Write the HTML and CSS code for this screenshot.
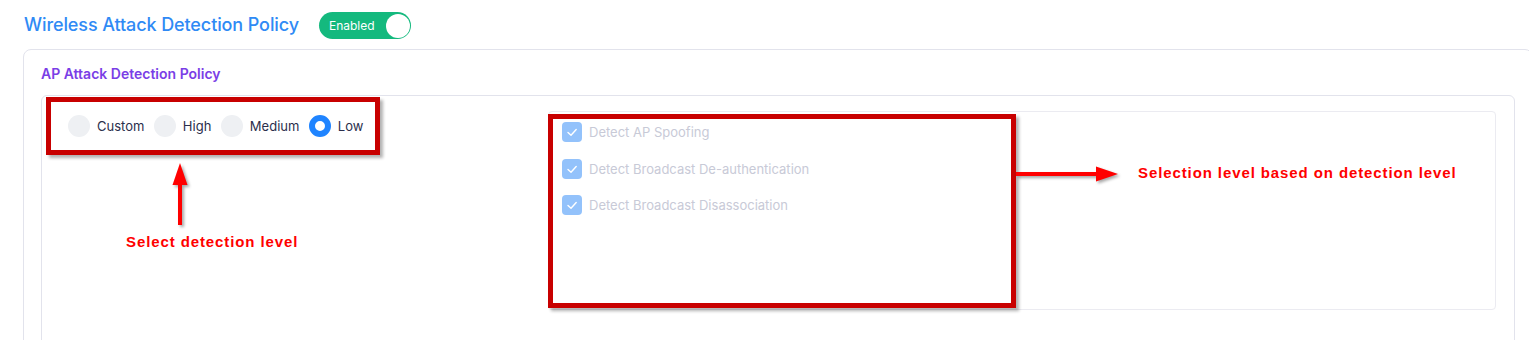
FILE: index.html
```html
<!DOCTYPE html>
<html lang="en">
<head>
    <meta charset="UTF-8">
    <meta name="viewport" content="width=device-width, initial-scale=1.0">
    <title>Wireless Attack Detection Policy</title>
    <link rel="stylesheet" href="styles.css">
</head>
<body>
    <div class="page">
        <div class="head">
            <h1 class="title">Wireless Attack Detection Policy</h1>
            <span class="toggle">
                <span class="toggle-text">Enabled</span>
                <span class="knob"></span>
            </span>
        </div>

        <section class="card">
            <h2 class="card-title">AP Attack Detection Policy</h2>
            <div class="policy">
                <div class="levels">
                    <label class="radio"><span class="dot"></span>Custom</label>
                    <label class="radio"><span class="dot"></span>High</label>
                    <label class="radio"><span class="dot"></span>Medium</label>
                    <label class="radio"><span class="dot on"></span>Low</label>
                </div>
                <div class="checks">
                    <div class="check">
                        <span class="box"><svg viewBox="0 0 20 20"><polyline points="6,10.5 9,13.2 14.2,7.5"/></svg></span>
                        Detect AP Spoofing
                    </div>
                    <div class="check">
                        <span class="box"><svg viewBox="0 0 20 20"><polyline points="6,10.5 9,13.2 14.2,7.5"/></svg></span>
                        Detect Broadcast De-authentication
                    </div>
                    <div class="check">
                        <span class="box"><svg viewBox="0 0 20 20"><polyline points="6,10.5 9,13.2 14.2,7.5"/></svg></span>
                        Detect Broadcast Disassociation
                    </div>
                </div>
            </div>
        </section>

        <!-- annotations drawn over the screenshot -->
        <div class="mark mark-levels"></div>
        <div class="mark mark-checks"></div>
        <svg class="arrow arrow-up" width="20" height="64" viewBox="0 0 20 64">
            <rect x="8" y="18" width="4" height="44"/>
            <polygon points="10,0 17.5,22 2.5,22"/>
        </svg>
        <svg class="arrow arrow-right" width="104" height="20" viewBox="0 0 104 20">
            <rect x="0" y="8" width="84" height="4"/>
            <polygon points="102,10 80,2.5 80,17.5"/>
        </svg>
        <span class="note note-levels">Select detection level</span>
        <span class="note note-checks">Selection level based on detection level</span>
    </div>
</body>
</html>
```

FILE: styles.css
```css
body {
    margin: 0;
    background: #fff;
    font-family: 'Inter', 'Noto Sans', sans-serif;
    overflow: hidden;
}

.page {
    position: relative;
    padding: 12px 0 0 23px;
}

.head {
    display: flex;
    align-items: center;
    gap: 20px;
    height: 27px;
    margin-bottom: 10px;
}

.title {
    margin: 0 0 3px 1px;
    font-size: 18px;
    font-weight: 500;
    color: #2f8af5;
    letter-spacing: -0.1px;
}

.toggle {
    display: flex;
    align-items: center;
    justify-content: space-between;
    width: 92px;
    height: 27px;
    box-sizing: border-box;
    padding: 0 1px 0 10px;
    border-radius: 14px;
    background: #14b97e;
}

.toggle-text {
    color: #fff;
    font-size: 12px;
}

.knob {
    width: 24px;
    height: 24px;
    border-radius: 50%;
    background: #fff;
}

.card {
    width: 1510px;
    box-sizing: border-box;
    border: 1px solid #e2e3ec;
    border-radius: 8px;
    padding: 14px 17px 40px;
}

.card-title {
    margin: 0 0 11px 0;
    font-size: 14px;
    font-weight: 600;
    line-height: 20px;
    color: #7a3ee6;
}

.policy {
    display: grid;
    grid-template-columns: 480px 1fr;
    gap: 8px;
    border: 1px solid #e2e3ec;
    border-radius: 6px;
    padding: 15px 18px 60px;
}

.levels {
    display: flex;
    align-items: center;
    gap: 9.5px;
    padding: 4px 8px;
    height: 22px;
}

.radio {
    display: flex;
    align-items: center;
    gap: 7px;
    font-size: 13px;
    color: #2b2f4c;
}

.dot {
    width: 22px;
    height: 22px;
    box-sizing: border-box;
    border-radius: 50%;
    background: #eef0f3;
}

.dot.on {
    background: #fff;
    border: 6px solid #1f84ff;
}

.checks {
    height: 199px;
    box-sizing: border-box;
    border: 1px solid #ebebf1;
    border-radius: 4px;
    padding: 10px 13px;
    display: flex;
    flex-direction: column;
    gap: 16.5px;
}

.check {
    display: flex;
    align-items: center;
    gap: 7px;
    height: 20px;
    font-size: 13px;
    color: #c8cad7;
}

.box {
    width: 20px;
    height: 20px;
    border-radius: 4px;
    background: #93c2fb;
}

.box svg {
    display: block;
    width: 20px;
    height: 20px;
    fill: none;
    stroke: #fff;
    stroke-width: 1.4;
    stroke-linecap: round;
    stroke-linejoin: round;
}

/* annotations */
.mark {
    position: absolute;
    border: 5px solid #c80000;
    box-shadow: 3px 3px 3px rgba(0, 0, 0, 0.3);
}

.mark-levels {
    left: 46px;
    top: 97px;
    width: 324px;
    height: 48px;
}

.mark-checks {
    left: 548px;
    top: 114px;
    width: 458px;
    height: 184px;
}

.arrow {
    position: absolute;
    fill: #ff0000;
    filter: drop-shadow(2px 2px 1.5px rgba(0, 0, 0, 0.35));
}

.arrow-up {
    left: 170px;
    top: 163px;
}

.arrow-right {
    left: 1016px;
    top: 164px;
}

.note {
    position: absolute;
    color: #ff0000;
    font-family: 'Liberation Sans', Arial, sans-serif;
    font-weight: bold;
    font-size: 15px;
    line-height: 16px;
    letter-spacing: 0.9px;
    white-space: nowrap;
}

.note-levels {
    left: 126px;
    top: 234px;
}

.note-checks {
    left: 1138px;
    top: 165px;
}
```
